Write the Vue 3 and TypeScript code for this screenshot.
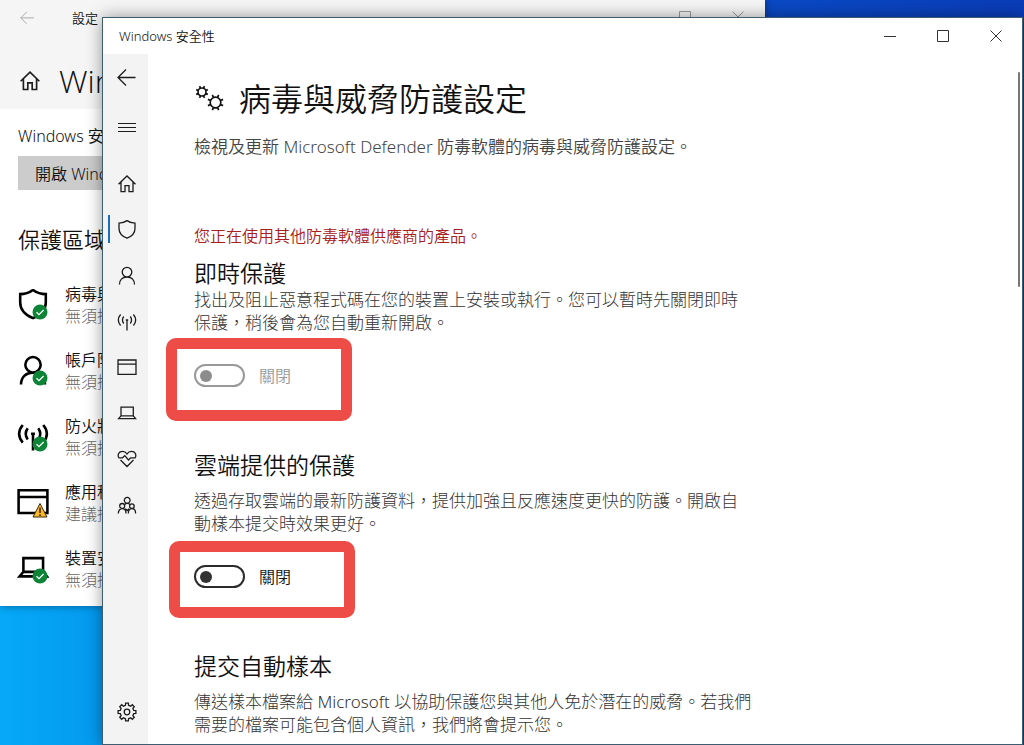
<script setup lang="ts">
import { ref } from 'vue'

type Badge = 'ok' | 'warn'

interface NavItem {
  label: string
  icon: string
  active?: boolean
}

interface Area {
  title: string
  status: string
  icon: string
  badge: Badge
}

function gearPath(c: number, outer: number, inner: number, teeth: number): string {
  const step = (Math.PI * 2) / teeth
  const pts: string[] = []
  for (let i = 0; i < teeth; i++) {
    const a = i * step - Math.PI / 2
    const corners: [number, number][] = [
      [-0.29, inner],
      [-0.2, outer],
      [0.2, outer],
      [0.29, inner],
    ]
    for (const [f, r] of corners) {
      const t = a + f * step
      pts.push(`${(c + Math.cos(t) * r).toFixed(2)} ${(c + Math.sin(t) * r).toFixed(2)}`)
    }
  }
  return `M${pts.join('L')}Z`
}

function cogPath(cx: number, cy: number, r: number, tip: number): string {
  let d = `M${cx - r} ${cy}a${r} ${r} 0 1 0 ${r * 2} 0a${r} ${r} 0 1 0 ${-r * 2} 0`
  for (let i = 0; i < 8; i++) {
    const t = (i * Math.PI) / 4 + Math.PI / 8
    const x = Math.cos(t)
    const y = Math.sin(t)
    d += `M${(cx + x * r).toFixed(2)} ${(cy + y * r).toFixed(2)}L${(cx + x * tip).toFixed(2)} ${(cy + y * tip).toFixed(2)}`
  }
  return d
}

const icons: Record<string, string> = {
  back: 'M18.5 10.5H1M9 2.5L1 10.5L9 18.5',
  menu: 'M1 5.5H19M1 9.5H19M1 13.5H19',
  home: 'M1.5 10.2L10 2L18.5 10.2M4 8.2V17.7H8V11.7H12V17.7H16V8.2',
  shield: 'M10 .6C12.5 2.4 15.2 3.2 18 3.2V8.4C18 13.2 14.4 16.4 10 18.2C5.6 16.4 2 13.2 2 8.4V3.2C4.8 3.2 7.5 2.4 10 .6Z',
  person: 'M5.2 6.1a4.8 4.8 0 1 0 9.6 0a4.8 4.8 0 1 0 -9.6 0M2.5 18.5C2.5 14 5.5 11 10 11S17.5 14 17.5 18.5',
  antenna: 'M10 8V18.5M8.8 8h2.4M6.7 4.5C5.2 6.6 5.2 9.4 6.7 11.5M13.3 4.5C14.8 6.6 14.8 9.4 13.3 11.5M3.6 2.5C0.7 6 0.7 10 3.6 13.5M16.4 2.5C19.3 6 19.3 10 16.4 13.5',
  app: 'M1 2H19V16.3H1ZM1 6.2H19',
  laptop: 'M4 3.2H16.3V11.8H4ZM4 11.8L1.6 14.6H18.6L16.3 11.8',
  heart: 'M1.7 7.6C0.5 5 1.5 1.4 5.5 1.4C7.5 1.4 9 2.3 10 4C11 2.3 12.5 1.4 14.5 1.4C18.5 1.4 19.5 5 18.3 7.6M1.4 7.8H5.5L7.8 5.6L11.5 10L13.7 7.8H18.6M3.5 10L10 16.5L16.5 10',
  people: 'M7.3 4.3a2.9 2.9 0 1 0 5.8 0a2.9 2.9 0 1 0 -5.8 0M2.7 10a2.5 2.5 0 1 0 5 0a2.5 2.5 0 1 0 -5 0M12.6 10.2a2.3 2.3 0 1 0 4.6 0a2.3 2.3 0 1 0 -4.6 0M1.3 17.5C1.3 14.5 3 12.7 5.2 12.7S9 14.5 9 17.5M11.3 17.5C11.3 14.5 12.7 12.7 14.9 12.7S18.6 14.5 18.6 17.5M7.6 8.5C8.4 7.7 9.2 7.3 10.2 7.3S12.2 7.7 12.8 8.4M8.3 12.6L10.2 14.5L12 12.8',
  gear: gearPath(10, 9, 6.9, 8) + 'M7.2 10a2.8 2.8 0 1 0 5.6 0a2.8 2.8 0 1 0 -5.6 0',
}

const cogs = cogPath(8, 8, 4, 6.3) + cogPath(21.5, 18.5, 5.3, 8.2)

const nav: NavItem[] = [
  { label: '首頁', icon: 'home' },
  { label: '病毒與威脅防護', icon: 'shield', active: true },
  { label: '帳戶防護', icon: 'person' },
  { label: '防火牆與網路保護', icon: 'antenna' },
  { label: '應用程式與瀏覽器控制', icon: 'app' },
  { label: '裝置安全性', icon: 'laptop' },
  { label: '裝置效能與運作狀況', icon: 'heart' },
  { label: '家長監護選項', icon: 'people' },
]

const areas: Area[] = [
  { title: '病毒與威脅防護', status: '無須採取動作', icon: 'shield', badge: 'ok' },
  { title: '帳戶防護', status: '無須採取動作', icon: 'person', badge: 'ok' },
  { title: '防火牆', status: '無須採取動作', icon: 'antenna', badge: 'ok' },
  { title: '應用程式', status: '建議採取動作', icon: 'app', badge: 'warn' },
  { title: '裝置安全性', status: '無須採取動作', icon: 'laptop', badge: 'ok' },
]

const realtime = ref(false)
const cloud = ref(false)
</script>

<template>
  <div class="desktop" lang="zh-Hant">
    <section class="settings" aria-label="設定">
      <header class="settings-head">
        <div class="settings-bar">
          <button class="plain faded" aria-label="上一頁">
            <svg class="icon small" viewBox="0 0 20 20"><path :d="icons.back" /></svg>
          </button>
          <span class="settings-name">設定</span>
          <div class="settings-controls">
            <svg class="glyph" viewBox="0 0 12 12"><path d="M.5 .5H11.5V11.5H.5Z" /></svg>
            <svg class="glyph" viewBox="0 0 12 12"><path d="M.5 .5L11.5 11.5M11.5 .5L.5 11.5" /></svg>
          </div>
        </div>
        <div class="settings-title">
          <svg class="icon home" viewBox="0 0 20 20"><path :d="icons.home" /></svg>
          <h1>Windows</h1>
        </div>
      </header>
      <div class="settings-body">
        <p class="intro">Windows 安全性</p>
        <button class="open">開啟 Windows 安全性</button>
        <h2>保護區域</h2>
        <ul class="areas">
          <li v-for="area in areas" :key="area.title">
            <span class="area-icon">
              <svg class="icon large" viewBox="0 0 20 20"><path :d="icons[area.icon]" /></svg>
              <svg v-if="area.badge === 'ok'" class="badge" viewBox="0 0 16 16">
                <circle cx="8" cy="8" r="7.5" fill="#0e8437" />
                <path d="M4.5 8.2L7 10.6L11.6 6" fill="none" stroke="#fff" stroke-width="1.3" />
              </svg>
              <svg v-else class="badge" viewBox="0 0 16 16">
                <path d="M8 1.5L15 15H1Z" fill="#fcb827" stroke="#3b2c0c" stroke-width="1" />
                <path d="M8 5.5V11M8 12.3V14" stroke="#221a08" stroke-width="1.4" />
              </svg>
            </span>
            <span class="area-text">
              <strong>{{ area.title }}</strong>
              <span>{{ area.status }}</span>
            </span>
          </li>
        </ul>
      </div>
    </section>

    <section class="security" aria-label="Windows 安全性">
      <header class="titlebar">
        <span class="app-name">Windows 安全性</span>
        <div class="controls">
          <button class="plain" aria-label="最小化">
            <svg class="glyph" viewBox="0 0 12 12"><path d="M0 6.5H12" /></svg>
          </button>
          <button class="plain" aria-label="最大化">
            <svg class="glyph" viewBox="0 0 12 12"><path d="M.5 .5H11.5V11.5H.5Z" /></svg>
          </button>
          <button class="plain" aria-label="關閉視窗">
            <svg class="glyph" viewBox="0 0 12 12"><path d="M.5 .5L11.5 11.5M11.5 .5L.5 11.5" /></svg>
          </button>
        </div>
      </header>

      <div class="body">
        <nav class="rail">
          <button class="plain" aria-label="上一頁">
            <svg class="icon" viewBox="0 0 20 20"><path :d="icons.back" /></svg>
          </button>
          <button class="plain menu" aria-label="選單">
            <svg class="icon" viewBox="0 0 20 20"><path :d="icons.menu" /></svg>
          </button>
          <a
            v-for="item in nav"
            :key="item.icon"
            href="#"
            :class="{ active: item.active }"
            :aria-label="item.label"
          >
            <svg class="icon" viewBox="0 0 20 20"><path :d="icons[item.icon]" /></svg>
          </a>
          <a href="#" class="gear" aria-label="設定">
            <svg class="icon" viewBox="0 0 20 20"><path :d="icons.gear" /></svg>
          </a>
        </nav>

        <main class="content">
          <h1 class="page-title">
            <svg class="cogs" viewBox="0 0 32 30"><path :d="cogs" /></svg>
            <span>病毒與威脅防護設定</span>
          </h1>
          <p class="subtitle">檢視及更新 Microsoft Defender 防毒軟體的病毒與威脅防護設定。</p>
          <p class="alert">您正在使用其他防毒軟體供應商的產品。</p>

          <section class="option compact">
            <h2>即時保護</h2>
            <p>找出及阻止惡意程式碼在您的裝置上安裝或執行。您可以暫時先關閉即時<br />保護，稍後會為您自動重新開啟。</p>
            <div class="toggle marked first">
              <input id="realtime" v-model="realtime" type="checkbox" role="switch" disabled />
              <label for="realtime">關閉</label>
            </div>
          </section>

          <section class="option">
            <h2>雲端提供的保護</h2>
            <p>透過存取雲端的最新防護資料，提供加強且反應速度更快的防護。開啟自<br />動樣本提交時效果更好。</p>
            <div class="toggle marked second">
              <input id="cloud" v-model="cloud" type="checkbox" role="switch" />
              <label for="cloud">{{ cloud ? '開啟' : '關閉' }}</label>
            </div>
          </section>

          <section class="option">
            <h2>提交自動樣本</h2>
            <p>傳送樣本檔案給 Microsoft 以協助保護您與其他人免於潛在的威脅。若我們<br />需要的檔案可能包含個人資訊，我們將會提示您。</p>
          </section>
        </main>
        <span class="scroll-thumb"></span>
      </div>
    </section>
  </div>
</template>

<style>
body {
  margin: 0;
}
</style>

<style scoped>
.desktop {
  position: relative;
  height: 100vh;
  overflow: hidden;
  background:
    linear-gradient(90deg, #0a4cc8, #0a3cb8) top right / 30% 20px no-repeat,
    linear-gradient(90deg, #06a9f8 0, #0499ee 103px, #0a3cb0 100%);
  font-family: 'Noto Sans', 'Noto Sans CJK TC', sans-serif;
  font-weight: 350;
  color: #111;
}

h1,
h2,
p,
ul {
  margin: 0;
  padding: 0;
  font-weight: 350;
}

button {
  font: inherit;
  color: inherit;
  border: 0;
  padding: 0;
}

.plain {
  display: flex;
  align-items: center;
  justify-content: center;
  background: none;
}

.icon {
  width: 20px;
  height: 20px;
  fill: none;
  stroke: #1c1c1c;
  stroke-width: 1.3;
}

.glyph {
  width: 12px;
  height: 12px;
  fill: none;
  stroke: #333;
  stroke-width: 1;
}

/* Settings window */
.settings {
  position: absolute;
  inset: 0 259px 139px 0;
  background: #fff;
  box-shadow: 0 0 8px rgba(0, 0, 0, 0.4);
  white-space: nowrap;
  overflow: hidden;
}

.settings-head {
  height: 109px;
  background: #f5f5f5;
}

.settings-bar {
  display: flex;
  align-items: center;
  height: 34px;
  padding: 0 21px 0 20px;
  font-size: 13px;
}

.small {
  width: 15px;
  height: 15px;
}

.faded .icon {
  stroke: #aaa;
}

.settings-name {
  flex: 1;
  margin-left: 37px;
}

.settings-controls {
  display: flex;
  gap: 41px;
}

.settings-controls .glyph {
  stroke: #999;
}

.settings-title {
  display: flex;
  align-items: center;
  gap: 18px;
  height: 44px;
  margin-top: 25px;
  padding: 0 19px;
}

.settings-title h1 {
  font-family: 'Open Sans', sans-serif;
  font-size: 32px;
  line-height: 44px;
}

.home {
  width: 22px;
  height: 22px;
  stroke-width: 1.5;
}

.settings-body {
  padding: 15px 18px 0;
  font-size: 16px;
}

.intro {
  line-height: 24px;
}

.open {
  display: block;
  height: 34px;
  margin-top: 8px;
  padding: 0 17px;
  background: #ccc;
}

.settings-body h2 {
  margin-top: 33px;
  font-size: 22px;
  line-height: 32px;
}

.areas {
  display: flex;
  flex-direction: column;
  gap: 22px;
  margin-top: 28px;
  list-style: none;
}

.areas li {
  display: flex;
  gap: 17px;
  height: 44px;
}

.area-icon {
  position: relative;
  width: 30px;
}

.large {
  width: 32px;
  height: 32px;
  margin-top: 6px;
  margin-left: -1px;
  stroke: #000;
  stroke-width: 1.6;
}

.badge {
  position: absolute;
  right: 0;
  top: 21px;
  width: 16px;
  height: 16px;
}

.area-text {
  display: flex;
  flex-direction: column;
  line-height: 22px;
  font-weight: 300;
  color: #666;
}

.area-text strong {
  font-weight: 350;
  color: #111;
}

/* Security window */
.security {
  position: absolute;
  inset: 18px 2px 1px 103px;
  display: flex;
  flex-direction: column;
  background: #fff;
  box-shadow: 0 0 0 1px #3f5d70, 0 0 16px rgba(0, 0, 0, 0.45);
}

.titlebar {
  display: flex;
  flex: none;
  height: 36px;
}

.app-name {
  flex: 1;
  padding-left: 16px;
  font-size: 13px;
  line-height: 36px;
}

.controls {
  display: flex;
}

.controls button {
  width: 53px;
}

.body {
  position: relative;
  display: flex;
  flex: 1;
  min-height: 0;
}

.rail {
  display: flex;
  flex: none;
  flex-direction: column;
  width: 45px;
  background: #f3f3f3;
}

.rail a,
.rail button {
  position: relative;
  display: flex;
  flex: none;
  align-items: center;
  justify-content: center;
  width: 48px;
  height: 46px;
}

.rail .menu {
  margin: 5px 0 10px;
}

.menu .icon {
  stroke-width: 1;
}

.rail .active::before {
  content: '';
  position: absolute;
  left: 5px;
  top: 8px;
  width: 2px;
  height: 28px;
  background: #1a6fc0;
}

.rail .gear {
  margin-top: auto;
  margin-bottom: 9px;
}

.content {
  flex: 1;
  min-width: 0;
  padding: 25px 20px 0 46px;
  overflow: hidden;
  white-space: nowrap;
}

.page-title {
  display: flex;
  align-items: center;
  gap: 13px;
  font-size: 32px;
  line-height: 40px;
}

.cogs {
  width: 32px;
  height: 30px;
  fill: none;
  stroke: #111;
  stroke-width: 1.7;
}

.subtitle {
  margin-top: 16px;
  font-size: 17px;
  line-height: 24px;
  color: #444;
}

.alert {
  margin-top: 65px;
  font-size: 16px;
  line-height: 24px;
  color: #a82020;
}

.option {
  margin-top: 63px;
}

.option h2 {
  margin-bottom: 9px;
  font-size: 23px;
  line-height: 30px;
}

.option.compact {
  margin-top: 10px;
}

.compact h2 {
  margin-bottom: 0;
}

.option p {
  font-size: 17px;
  line-height: 23px;
  font-weight: 300;
  color: #333;
}

.toggle {
  position: relative;
  display: flex;
  align-items: center;
  gap: 14px;
  width: max-content;
  height: 23px;
  margin-top: 30px;
  font-size: 16px;
  line-height: 22px;
}

.toggle input {
  appearance: none;
  box-sizing: border-box;
  display: flex;
  align-items: center;
  width: 51px;
  height: 23px;
  margin: 0;
  padding-left: 4px;
  border: 2px solid #2b2b2b;
  border-radius: 12px;
}

.toggle input::before {
  content: '';
  width: 12px;
  height: 12px;
  border-radius: 50%;
  background: #333;
}

.toggle input:checked {
  padding-left: 31px;
}

.toggle input:disabled {
  border-color: #999;
}

.toggle input:disabled::before {
  background: #8c8c8c;
}

.toggle input:disabled + label {
  color: #999;
}

.marked::after {
  content: '';
  position: absolute;
  border: 11px solid #ee4d47;
  border-radius: 10px;
  pointer-events: none;
}

.first::after {
  inset: -26px -61px -34px -28px;
}

.second::after {
  inset: -24px -64px -30px -25px;
}

.scroll-thumb {
  position: absolute;
  right: 2px;
  top: 18px;
  width: 2px;
  height: 215px;
  border-radius: 1px;
  background: #777;
}
</style>
